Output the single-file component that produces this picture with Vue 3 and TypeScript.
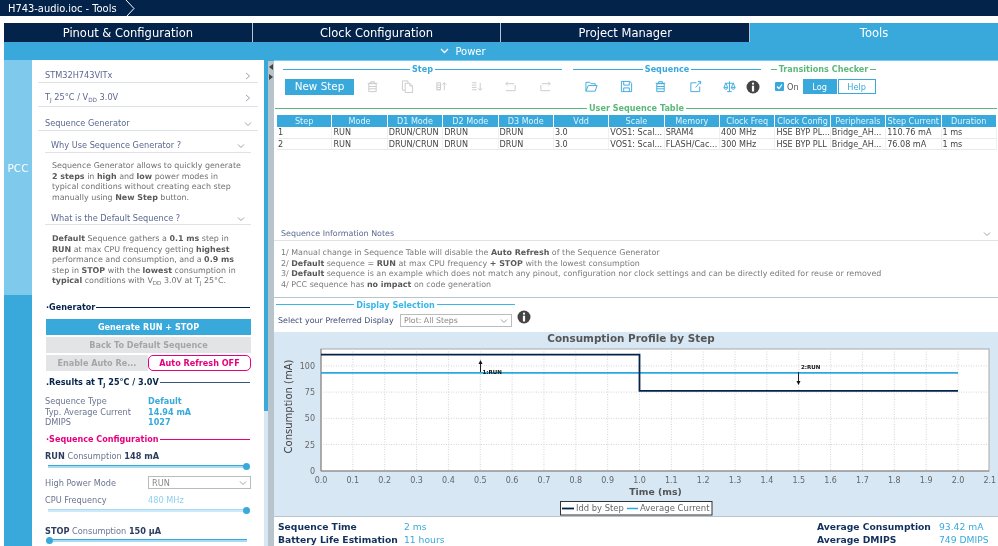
<script setup lang="ts">
const tabs = ['Pinout & Configuration', 'Clock Configuration', 'Project Manager', 'Tools']
const columns = ['Step', 'Mode', 'D1 Mode', 'D2 Mode', 'D3 Mode', 'Vdd', 'Scale', 'Memory', 'Clock Freq', 'Clock Config', 'Peripherals', 'Step Current', 'Duration']
const rows = [
  ['1', 'RUN', 'DRUN/CRUN', 'DRUN', 'DRUN', '3.0', 'VOS1: Scal...', 'SRAM4', '400 MHz', 'HSE BYP PL...', 'Bridge_AH...', '110.76 mA', '1 ms'],
  ['2', 'RUN', 'DRUN/CRUN', 'DRUN', 'DRUN', '3.0', 'VOS1: Scal...', 'FLASH/Cac...', '300 MHz', 'HSE BYP PLL', 'Bridge_AH...', '76.08 mA', '1 ms'],
]
const x0 = 321
const pxPerTick = 31.85
const xTicks = Array.from({ length: 22 }, (_, i) => ({ x: x0 + i * pxPerTick, label: (i / 10).toFixed(1) }))
const yZero = 470.7
const pxPerMa = 26.2 / 25
const yTicks = [0, 25, 50, 75, 100].map((v) => ({ y: yZero - v * pxPerMa, label: String(v) }))
const yOf = (v: number) => yZero - v * pxPerMa
const xOf = (t: number) => x0 + t * 10 * pxPerTick
const iddPath = `M${xOf(0)} ${yOf(110.76)}H${xOf(1)}V${yOf(76.08)}H${xOf(2)}`
</script>

<template>
  <div class="app">
    <header class="crumb">
      <span class="crumb-text">H743-audio.ioc - Tools</span>
      <svg class="crumb-arrow" width="12" height="17" viewBox="0 0 12 17"><path d="M1 0l8 8.5L1 17" fill="none" stroke="#fff" stroke-width="1" /></svg>
    </header>
    <nav class="tabs">
      <div v-for="(t, i) in tabs" :key="t" class="tab" :class="{ active: i === 3 }">{{ t }}</div>
    </nav>
    <div class="power">
      <svg width="9" height="6" viewBox="0 0 9 6"><path d="M1 1l3.5 3.5L8 1" fill="none" stroke="#fff" stroke-width="1.3" /></svg>
      <span>Power</span>
    </div>

    <main class="body">
      <aside class="rail">
        <div class="rail-top"><span class="rail-label">PCC</span></div>
        <div class="rail-bottom"></div>
      </aside>

      <section class="side">
        <div class="acc acc-1"><span>STM32H743VITx</span><svg class="chev" viewBox="0 0 8 8"><path d="M2 1l3.5 3L2 7" /></svg></div>
        <div class="acc acc-2"><span>T<sub>J</sub> 25°C / V<sub>DD</sub> 3.0V</span><svg class="chev" viewBox="0 0 8 8"><path d="M2 1l3.5 3L2 7" /></svg></div>
        <div class="acc acc-3"><span>Sequence Generator</span><svg class="chev" viewBox="0 0 8 8"><path d="M1 2.5l3 3 3-3" /></svg></div>
        <div class="acc sub acc-4"><span>Why Use Sequence Generator ?</span><svg class="chev" viewBox="0 0 8 8"><path d="M1 2.5l3 3 3-3" /></svg></div>
        <p class="para para-1">Sequence Generator allows to quickly generate<br /><b>2 steps</b> in <b>high</b> and <b>low</b> power modes in<br />typical conditions without creating each step<br />manually using <b>New Step</b> button.</p>
        <div class="acc sub acc-5"><span>What is the Default Sequence ?</span><svg class="chev" viewBox="0 0 8 8"><path d="M1 2.5l3 3 3-3" /></svg></div>
        <p class="para para-2"><b>Default</b> Sequence gathers a <b>0.1 ms</b> step in<br /><b>RUN</b> at max CPU frequency getting <b>highest</b><br />performance and consumption, and a <b>0.9 ms</b><br />step in <b>STOP</b> with the <b>lowest</b> consumption in<br /><b>typical</b> conditions with V<sub>DD</sub> 3.0V at T<sub>J</sub> 25°C.</p>

        <div class="sect sect-gen"><b>·Generator</b><i></i></div>
        <div class="btn-wide primary">Generate RUN + STOP</div>
        <div class="btn-wide muted">Back To Default Sequence</div>
        <div class="btn-pair">
          <div class="btn-half muted">Enable Auto Re...</div>
          <div class="btn-pink">Auto Refresh OFF</div>
        </div>
        <div class="sect sect-res"><b>.Results at T<sub>J</sub> 25°C / 3.0V</b><i></i></div>
        <dl class="results">
          <dt>Sequence Type</dt><dd>Default</dd>
          <dt>Typ. Average Current</dt><dd>14.94 mA</dd>
          <dt>DMIPS</dt><dd>1027</dd>
        </dl>
        <div class="sect sect-seq"><b>·Sequence Configuration</b><i></i></div>
        <div class="cons"><b>RUN</b> Consumption <b>148 mA</b></div>
        <div class="slider right"><i></i></div>
        <div class="field">
          <span>High Power Mode</span>
          <div class="select small"><span>RUN</span><svg class="chev" viewBox="0 0 8 8"><path d="M1 2.5l3 3 3-3" /></svg></div>
        </div>
        <div class="field freq"><span>CPU Frequency</span><em>480 MHz</em></div>
        <div class="slider right light"><i></i></div>
        <div class="cons stop"><b>STOP</b> Consumption <b>150 µA</b></div>
        <div class="slider left"><i></i></div>
      </section>

      <div class="scrollbar"><div class="scroll-thumb"></div></div>
      <div class="splitter">
        <span class="tri tri-l"></span>
        <span class="tri tri-r"></span>
      </div>

      <section class="main">
        <div class="top">
          <div class="legends">
            <div class="legend blue l-step"><i></i><span>Step</span><i></i></div>
            <div class="legend blue l-seq"><i></i><span>Sequence</span><i></i></div>
            <div class="legend green l-tr"><i></i><span>Transitions Checker</span><i></i></div>
          </div>
          <div class="toolbar">
            <div class="new-step">New Step</div>
            <div class="tools tools-step">
              <svg viewBox="0 0 14 14"><path d="M3 4h8v8.5H3zM1.8 3.500h10.400M5 3.500V1.800h4v1.700M3 7h8M3 9.500h8" /></svg>
              <svg viewBox="0 0 14 14"><path d="M1.500 1h6v2M1.500 1v10h2.500M4.500 3.500h5l3 3v7h-8zM9.500 3.500v3h3" /></svg>
              <svg viewBox="0 0 14 14"><path d="M2 3h4M2 5.500h4M2 8h4M2 10.500h4M2 3v7.500h4V3M10 11V3M8 5l2-2 2 2" /></svg>
              <svg viewBox="0 0 14 14"><path d="M2 3h5M2 5.500h5M2 8h5M2 10.500h5M11 3v8M9 9l2 2 2-2" /></svg>
              <svg viewBox="0 0 14 14"><path d="M2 11.500h10V5.500M2 4h9M4 2L2 4l2 2" /></svg>
              <svg viewBox="0 0 14 14"><path d="M12 11.500H2V5.500M3 4h9M10 2l2 2-2 2" /></svg>
            </div>
            <div class="tools tools-seq">
              <svg viewBox="0 0 14 14"><path d="M1 12V2.500h4l1.500 1.500H11V6M1 12h10l2-6H3.500z" /></svg>
              <svg viewBox="0 0 14 14"><path d="M1.500 1.500h9l2 2v9h-11zM4 1.500v4h6v-4M4 12.500V8.500h6v4" /></svg>
              <svg viewBox="0 0 14 14"><path d="M3 4h8v8.500H3zM1.800 3.500h10.400M5 3.500V1.800h4v1.700M3 7h8M3 9.500h8" /></svg>
              <svg viewBox="0 0 14 14"><path d="M8 3H2v9.500h9.500V7M7 8l5.500-6M9.500 1.500h3v3" /></svg>
              <svg class="balance" viewBox="0 0 14 14"><path d="M7 1.500V12.500M4.500 12.500h5M2 3.500h10M3 3.500L1 8h4zM11 3.500L9 8h4zM1 8a2 2 0 0 0 4 0M9 8a2 2 0 0 0 4 0" /></svg>
              <svg class="info" viewBox="0 0 14 14"><circle cx="7" cy="7" r="6.500" /><circle class="cut" cx="7" cy="3.700" r="1.100" /><rect class="cut" x="5.900" y="5.700" width="2.200" height="5.800" /></svg>
            </div>
            <label class="check"><svg width="9" height="9" viewBox="0 0 9 9"><rect width="9" height="9" rx="1" fill="#39a9dc" /><path d="M2 4.500l2 2 3-4" fill="none" stroke="#fff" stroke-width="1.200" /></svg><span>On</span></label>
            <div class="log">Log</div>
            <div class="help">Help</div>
          </div>
          <div class="legend green l-table"><i></i><span>User Sequence Table</span><i></i></div>
          <div class="table">
            <div v-for="c in columns" :key="c" class="th">{{ c }}</div>
            <template v-for="(r, ri) in rows" :key="ri">
              <div v-for="(v, ci) in r" :key="ci" class="td">{{ v }}</div>
            </template>
          </div>
          <div class="notes-head">
            <span>Sequence Information Notes</span>
            <svg class="chev" viewBox="0 0 8 8"><path d="M1 2.500l3 3 3-3" /></svg>
          </div>
          <div class="notes">
            <div>1/ Manual change in Sequence Table will disable the <b>Auto Refresh</b> of the Sequence Generator</div>
            <div>2/ <b>Default</b> sequence = <b>RUN</b> at max CPU frequency <b>+ STOP</b> with the lowest consumption</div>
            <div>3/ <b>Default</b> sequence is an example which does not match any pinout, configuration nor clock settings and can be directly edited for reuse or removed</div>
            <div>4/ PCC sequence has <b>no impact</b> on code generation</div>
          </div>
        </div>

        <div class="display">
          <div class="legend cyan l-disp"><i></i><span>Display Selection</span><i></i></div>
          <div class="disp-row">
            <span class="disp-label">Select your Preferred Display</span>
            <div class="select big"><span>Plot: All Steps</span><svg class="chev" viewBox="0 0 8 8"><path d="M1 2.500l3 3 3-3" /></svg></div>
            <svg class="info-lg" viewBox="0 0 14 14"><circle cx="7" cy="7" r="6.500" fill="#444" /><circle cx="7" cy="3.700" r="1.100" fill="#fff" /><rect x="5.900" y="5.700" width="2.200" height="5.800" fill="#fff" /></svg>
          </div>
        </div>

        <div class="chart">
          <svg width="724" height="184" viewBox="274 332 724 184" font-family="'DejaVu Sans', sans-serif">
            <text x="631" y="342" text-anchor="middle" font-size="10.400" font-weight="700" fill="#555">Consumption Profile by Step</text>
            <rect x="321" y="349" width="668" height="122" fill="#fff" stroke="#a8a8a8" />
            <g stroke="#d4d4d4" stroke-width="1" stroke-dasharray="1 1.500">
              <line v-for="t in xTicks.slice(1, 21)" :key="t.label" :x1="t.x" y1="349" :x2="t.x" y2="471" />
              <line v-for="t in yTicks.slice(1)" :key="t.label" x1="321" :y1="t.y" x2="989" :y2="t.y" />
            </g>
            <path d="M321 349V471H989" fill="none" stroke="#888" />
            <g font-size="8" fill="#666" text-anchor="middle">
              <text v-for="t in xTicks" :key="t.label" :x="t.x" y="483">{{ t.label }}</text>
            </g>
            <g font-size="8" fill="#666" text-anchor="end">
              <text v-for="t in yTicks" :key="t.label" x="315" :y="t.y + 3">{{ t.label }}</text>
            </g>
            <text transform="translate(291.500 406.500) rotate(-90)" text-anchor="middle" font-size="10" fill="#444">Consumption (mA)</text>
            <text x="655.500" y="495" text-anchor="middle" font-size="9.300" font-weight="700" fill="#555">Time (ms)</text>
            <line :x1="xOf(0)" :y1="yOf(93.42)" :x2="xOf(2)" :y2="yOf(93.42)" stroke="#29a9e0" stroke-width="1.800" />
            <path :d="iddPath" fill="none" stroke="#03234b" stroke-width="1.800" />
            <path d="M480.500 372V361" stroke="#222" fill="none" />
            <path d="M480.500 360l-2 4h4z" fill="#111" />
            <text x="482.500" y="374" font-size="5.500" font-weight="700" fill="#111">1:RUN</text>
            <path d="M798.500 372V383" stroke="#222" fill="none" />
            <path d="M798.500 385l-2-4h4z" fill="#111" />
            <text x="801" y="369" font-size="5.500" font-weight="700" fill="#111">2:RUN</text>
            <rect x="560.500" y="501.500" width="151.500" height="13.500" fill="#fff" stroke="#333" />
            <line x1="562" y1="508.500" x2="574" y2="508.500" stroke="#03234b" stroke-width="1.800" />
            <text x="576" y="511" font-size="8.400" fill="#666">Idd by Step</text>
            <line x1="627" y1="508.500" x2="638" y2="508.500" stroke="#29a9e0" stroke-width="1.500" />
            <text x="640" y="511" font-size="8.500" fill="#666">Average Current</text>
          </svg>
        </div>

        <footer class="foot">
          <div class="foot-group">
            <b>Sequence Time</b><em>2 ms</em>
            <b>Battery Life Estimation</b><em>11 hours</em>
          </div>
          <div class="foot-group right">
            <b>Average Consumption</b><em>93.42 mA</em>
            <b>Average DMIPS</b><em>749 DMIPS</em>
          </div>
        </footer>
      </section>
    </main>
  </div>
</template>

<style>
html, body { margin: 0; background: #fff; overflow: hidden; }
</style>

<style scoped>
.app { width: 998px; height: 546px; display: flex; flex-direction: column; overflow: hidden; font-family: 'DejaVu Sans', sans-serif; font-size: 8.200px; color: #555; background: #fff; filter: blur(0.300px); }
b { font-weight: 700; }
sub { font-size: 70%; line-height: 0; vertical-align: -2px; }
em { font-style: normal; }
.crumb { height: 16px; background: #03234b; display: flex; align-items: center; flex: none; margin-bottom: 7px; }
.crumb-text { color: #fff; font-size: 9.900px; margin-left: 8px; }
.crumb-arrow { margin-left: 8px; }
.tabs { display: flex; margin-left: 4px; height: 19px; flex: none; }
.tab { width: 248.700px; background: #03234b; color: #fff; font-size: 11.500px; display: flex; align-items: center; justify-content: center; border-right: 1px solid #b5c4d0; box-sizing: border-box; }
.tab.active { background: #39a9dc; border-right: 0; flex: 1; }
.power { height: 18px; margin-left: 4px; padding-right: 76px; flex: none; background: #39a9dc; color: #fff; font-size: 10px; display: flex; align-items: center; justify-content: center; gap: 6px; box-sizing: border-box; }
.body { flex: 1; display: flex; min-height: 0; padding-left: 4px; }
.rail { width: 28px; display: flex; flex-direction: column; flex: none; }
.rail-top { height: 235px; background: #7fc9ec; display: flex; align-items: center; justify-content: center; color: #fff; font-size: 10.500px; }
.rail-label { margin-top: -19px; }
.rail-bottom { flex: 1; background: #39a9dc; }
.side { width: 232px; flex: none; padding: 0 6px 0 6px; box-sizing: border-box; overflow: hidden; background: #fff; }
.acc { display: flex; justify-content: space-between; align-items: flex-end; color: #5b6890; border-bottom: 1px solid #dfe3e8; padding: 0 6px 2px 7px; box-sizing: border-box; font-size: 8.200px; }
.acc-1 { height: 23px; }
.acc-2 { height: 24px; padding-bottom: 4px; }
.acc-3 { height: 24px; }
.sub { margin: 0 7px; padding: 0 6px 2px 6px; }
.acc-4 { height: 22px; }
.acc-5 { height: 19px; margin-top: 4px; padding-bottom: 1px; }
.chev { width: 8px; height: 8px; flex: none; fill: none; stroke: #8d98a6; stroke-width: 0.900; }
.para { margin: 8px 0 0 14px; line-height: 10.500px; color: #707070; font-size: 7.950px; white-space: nowrap; }
.para-1 { height: 41px; }
.para-2 { margin-top: 9px; height: 51px; }
.para b { color: #5a5a5a; }
.sect { display: flex; align-items: center; margin: 0 8px 0 8px; font-weight: 700; font-size: 8.100px; }
.sect i { flex: 1; height: 1px; margin-left: 1px; }
.sect-gen { color: #03234b; height: 14px; margin-top: 15px; }
.sect-gen i { background: #03234b; }
.sect-res { color: #03234b; height: 14px; margin-top: 4px; }
.sect-res i { background: #35567a; }
.sect-seq { color: #e6007e; height: 14px; margin-top: 4px; }
.sect-seq i { background: #e6007e; }
.btn-wide { height: 16px; margin: 0 7px 2px 8px; display: flex; align-items: center; justify-content: center; font-weight: 700; font-size: 8.100px; }
.sect-gen + .btn-wide { margin-top: 5px; }
.primary { background: #39a9dc; color: #fff; }
.muted { background: #e2e4e6; color: #a5a5a5; }
.btn-pair { display: flex; margin: 0 7px 0 8px; height: 16px; }
.btn-half { width: 102px; display: flex; align-items: center; justify-content: center; font-weight: 700; font-size: 8.100px; }
.btn-pink { flex: 1; border: 1px solid #e6007e; border-radius: 5px; color: #e6007e; display: flex; align-items: center; justify-content: center; font-weight: 700; font-size: 8.100px; box-sizing: border-box; }
.results { margin: 7px 0 0 7px; display: grid; grid-template-columns: 103px 1fr; line-height: 10.700px; }
.results dt { color: #6a7590; }
.results dd { margin: 0; color: #39a9dc; font-weight: 700; font-size: 8.100px; }
.cons { margin: 5px 0 0 7px; color: #6a7590; height: 11px; line-height: 11px; }
.cons b { color: #2c3e5e; }
.cons.stop { margin-top: 14px; }
.slider { height: 2px; margin: 4px 11px 0 10px; background: #a9dcf3; border: 0 solid #39a9dc; border-width: 1px 0 0; position: relative; }
.cons + .slider { margin-top: 3px; }
.slider i { position: absolute; width: 7px; height: 7px; border-radius: 50%; background: #39a9dc; top: -3px; }
.slider.right i { right: -3px; }
.slider.left i { left: -2px; }
.slider.light { border-color: #a9dcf3; background: #cdeafa; }
.cons.stop + .slider { margin-top: 2px; }
.field { display: flex; align-items: center; margin: 8px 7px 0 7px; color: #6a7590; height: 13px; }
.field > span { width: 103px; }
.field em { color: #8dcff0; }
.freq { margin-top: 5px; height: 11px; }
.select { display: flex; justify-content: space-between; align-items: center; border: 1px solid #bbb; padding: 0 3px; box-sizing: border-box; background: #fff; color: #888; }
.select.small { flex: 1; height: 13px; }
.select.big { width: 112px; height: 13px; font-size: 7.800px; }
.scrollbar { width: 4px; flex: none; background: #d8e7f4; }
.scroll-thumb { height: 351px; background: #39a9dc; }
.splitter { width: 6px; flex: none; background: #b8c4cc; display: flex; flex-direction: column; align-items: center; gap: 4px; padding-top: 3px; box-sizing: border-box; border-top: 1px solid #39a9dc; }
.tri { width: 0; height: 0; border: 3px solid transparent; }
.tri-l { border-right: 4px solid #444; border-left: 0; }
.tri-r { border-left: 4px solid #444; border-right: 0; }
.main { flex: 1; display: flex; flex-direction: column; min-width: 0; }
.top { height: 238px; flex: none; border-bottom: 1px solid #b8c4cc; border-top: 1px solid #7fc9ec; box-sizing: border-box; }
.legends { display: flex; height: 17px; padding: 1px 0 0 9px; box-sizing: border-box; }
.legend { display: flex; align-items: center; font-weight: 700; font-size: 8.100px; gap: 2px; height: 14px; white-space: nowrap; }
.legend i { flex: 1; height: 1px; background: currentColor; }
.blue { color: #39a9dc; }
.green { color: #5cb87a; }
.cyan { color: #39b6e6; }
.l-step { width: 279px; }
.l-seq { width: 188px; margin-left: 11px; }
.l-tr { width: 105px; margin-left: 10px; }
.l-tr i { flex: 1; }
.l-table { margin-left: 1px; width: 722px; margin-top: 6px; }
.l-table i:first-child { flex: none; width: 312px; }
.toolbar { display: flex; align-items: center; height: 17px; padding-left: 11px; }
.new-step { width: 69px; height: 16px; padding-bottom: 1px; box-sizing: border-box; background: #39a9dc; color: #fff; font-size: 10.400px; display: flex; align-items: center; justify-content: center; flex: none; }
.tools { display: flex; align-items: center; flex: none; }
.tools svg { width: 13px; height: 13px; fill: none; stroke-width: 1; flex: none; }
.tools-step { margin-left: 12px; gap: 21.500px; width: 210px; }
.tools-step svg { stroke: #c9c9c9; }
.tools-seq { margin-left: 9px; gap: 21.500px; width: 175px; }
.tools-seq svg { stroke: #39a9dc; }
.tools-seq .balance { margin-right: -11.500px; }
.tools-seq svg.info { width: 14px; height: 14px; stroke: none; fill: #444; }
.tools-seq .cut { fill: #fff; }
.check { display: flex; align-items: center; gap: 3px; margin-left: 15px; color: #555; font-size: 8.200px; flex: none; }
.log, .help { height: 15px; display: flex; align-items: center; justify-content: center; flex: none; font-size: 8.200px; box-sizing: border-box; }
.log { width: 34px; background: #39a9dc; color: #fff; margin-left: 4px; }
.help { width: 38px; border: 1px solid #39a9dc; color: #39a9dc; margin-left: 1px; }
.table { display: grid; grid-template-columns: repeat(13, 55.380px); margin: 0 0 0 3px; }
.th { height: 12px; background: #39a9dc; color: #dff2fb; text-align: center; line-height: 12px; border-right: 1px solid #fff; box-sizing: border-box; font-size: 8.100px; }
.td { height: 10.500px; line-height: 10.500px; color: #444; border-right: 1px solid #eef0f2; border-bottom: 1px solid #e6eaee; box-sizing: content-box; padding-left: 1px; white-space: nowrap; overflow: hidden; font-size: 8.100px; }
.notes-head { display: flex; justify-content: space-between; align-items: flex-end; margin-top: 76px; height: 15px; padding: 0 7px 2px 7px; box-sizing: border-box; color: #5b6890; border-bottom: 1px solid #dfe3e8; font-size: 7.950px; }
.notes { margin-top: 7px; padding-left: 7px; color: #7a7a7a; line-height: 10.500px; font-size: 7.950px; white-space: nowrap; }
.notes b { color: #5a5a5a; }
.display { height: 34px; flex: none; }
.legend.l-disp { width: 239px; margin: 0 0 0 2px; height: 13px; }
.disp-row { display: flex; align-items: center; height: 15px; padding-left: 4px; color: #3f4d78; margin-top: 2px; }
.disp-label { width: 122px; font-size: 7.950px; }
.info-lg { width: 14px; height: 14px; margin: -8px 0 0 5px; }
.chart { height: 184px; flex: none; background: #d8e7f4; border-bottom: 1px solid #b8c4cc; }
.chart svg { display: block; }
.foot { flex: 1; display: flex; justify-content: space-between; padding: 3px 3px 0 4px; font-size: 9.200px; }
.foot-group { display: grid; grid-template-columns: 126px auto; line-height: 13px; }
.foot-group.right { grid-template-columns: 122px 56px; }
.foot b { color: #12305c; }
.foot em { color: #39a9dc; white-space: nowrap; }
</style>
